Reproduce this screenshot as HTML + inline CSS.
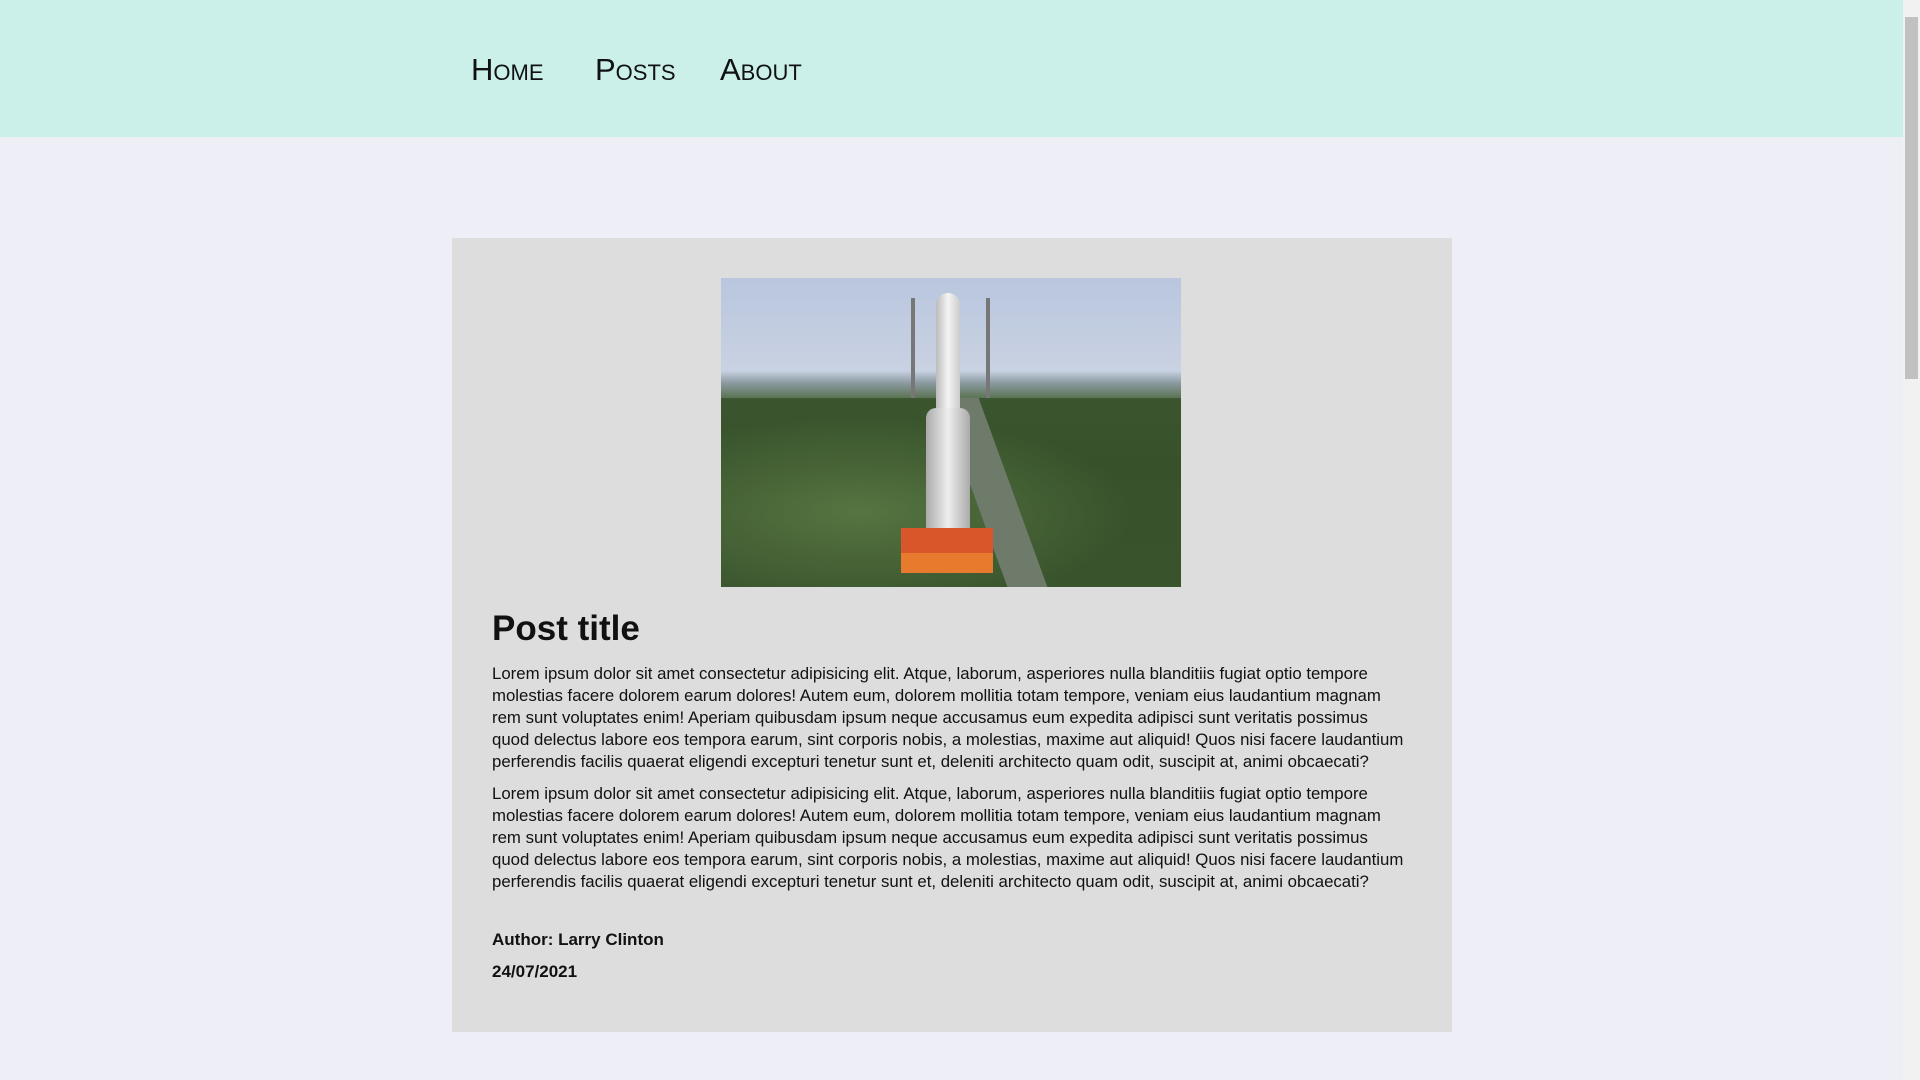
<!DOCTYPE html>
<html><head><meta charset="utf-8"><style>
html,body{margin:0;padding:0}
body{width:1920px;height:1080px;overflow:hidden;background:#eeeef7;font-family:"Liberation Sans",sans-serif;color:#111;position:relative}
.nav{position:absolute;left:0;top:0;width:1903px;height:137px;background:#cbf0ea}
.nav a{position:absolute;top:52px;font-size:31px;font-variant:small-caps;color:#111;text-decoration:none}
.sb{position:absolute;right:0;top:0;width:17px;height:1080px;background:#f1f1f1}
.sb .th{position:absolute;left:2px;top:17px;width:13px;height:362px;background:#c1c1c1}
.card{position:absolute;left:452px;top:238px;width:1000px;height:794px;background:#dddddd}
.img{position:absolute;left:269px;top:40px;width:460px;height:309px;overflow:hidden;
background:linear-gradient(#b9c6de 0%,#c9d2e2 30%,#8a9aa0 34%,#4f6a40 40%,#3f5a2f 60%,#4b6438 100%)}
h1{position:absolute;left:40px;top:371px;margin:0;font-size:35px;font-weight:bold}
p{position:absolute;left:40px;width:915px;margin:0;font-size:16.8px;line-height:22px}
.b{position:absolute;left:40px;font-size:17px;font-weight:bold}
</style></head><body>
<div class="nav">
<a style="left:471px">Home</a><a style="left:595px">Posts</a><a style="left:720px">About</a>
</div>
<div class="card">
<div class="img">
<div style="position:absolute;left:0;top:120px;width:460px;height:189px;background:radial-gradient(ellipse at 30% 60%,#5b7a45 0%,#35502a 60%);opacity:.8"></div>
<div style="position:absolute;left:252px;top:120px;width:40px;height:189px;background:#6e7a6a;transform:skewX(20deg)"></div>
<div style="position:absolute;left:190px;top:20px;width:4px;height:100px;background:#777"></div>
<div style="position:absolute;left:265px;top:20px;width:4px;height:100px;background:#777"></div>
<div style="position:absolute;left:215px;top:15px;width:24px;height:240px;background:linear-gradient(90deg,#bbb,#f4f4f4,#ccc);border-radius:12px 12px 0 0"></div>
<div style="position:absolute;left:205px;top:130px;width:44px;height:125px;background:linear-gradient(90deg,#aaa,#eee,#aaa);border-radius:10px 10px 0 0"></div>
<div style="position:absolute;left:180px;top:250px;width:92px;height:45px;background:#d9552a"></div>
<div style="position:absolute;left:180px;top:275px;width:92px;height:20px;background:#e87a2d"></div>
</div>
<h1>Post title</h1>
<p style="top:425px">Lorem ipsum dolor sit amet consectetur adipisicing elit. Atque, laborum, asperiores nulla blanditiis fugiat optio tempore molestias facere dolorem earum dolores! Autem eum, dolorem mollitia totam tempore, veniam eius laudantium magnam rem sunt voluptates enim! Aperiam quibusdam ipsum neque accusamus eum expedita adipisci sunt veritatis possimus quod delectus labore eos tempora earum, sint corporis nobis, a molestias, maxime aut aliquid! Quos nisi facere laudantium perferendis facilis quaerat eligendi excepturi tenetur sunt et, deleniti architecto quam odit, suscipit at, animi obcaecati?</p>
<p style="top:545px">Lorem ipsum dolor sit amet consectetur adipisicing elit. Atque, laborum, asperiores nulla blanditiis fugiat optio tempore molestias facere dolorem earum dolores! Autem eum, dolorem mollitia totam tempore, veniam eius laudantium magnam rem sunt voluptates enim! Aperiam quibusdam ipsum neque accusamus eum expedita adipisci sunt veritatis possimus quod delectus labore eos tempora earum, sint corporis nobis, a molestias, maxime aut aliquid! Quos nisi facere laudantium perferendis facilis quaerat eligendi excepturi tenetur sunt et, deleniti architecto quam odit, suscipit at, animi obcaecati?</p>
<div class="b" style="top:692px">Author: Larry Clinton</div>
<div class="b" style="top:724px">24/07/2021</div>
</div>
<div class="sb"><div class="th"></div></div>
</body></html>
